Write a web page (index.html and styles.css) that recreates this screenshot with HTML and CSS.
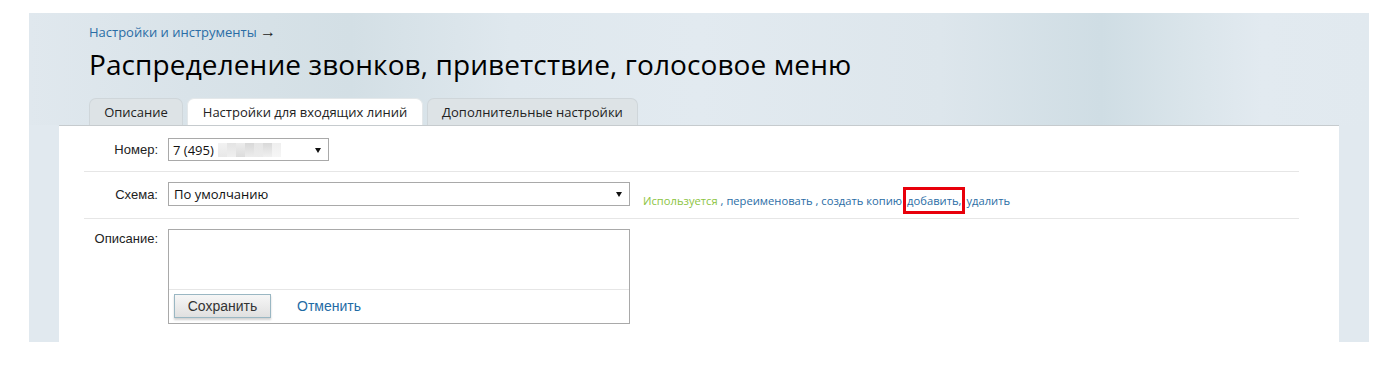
FILE: index.html
```html
<!DOCTYPE html>
<html lang="ru">
<head>
<meta charset="utf-8">
<link rel="stylesheet" href="styles.css">
</head>
<body>
<div class="page">
  <div class="header">
    <div class="crumbs"><a class="crumb" href="#">Настройки и инструменты</a> <span class="arrow">→</span></div>
    <h1 class="title">Распределение звонков, приветствие, голосовое меню</h1>
    <div class="tabs">
      <div class="tab tab-1">Описание</div>
      <div class="tab tab-active">Настройки для входящих линий</div>
      <div class="tab tab-3">Дополнительные настройки</div>
    </div>
  </div>
  <div class="content">
    <div class="row row-number">
      <div class="label">Номер:</div>
      <div class="select select-number">
        <span class="val">7 (495)</span>
        <span class="blur"><i class="b1"></i><i class="b2"></i><i class="b3"></i><i class="b4"></i><i class="b5"></i><i class="b6"></i><i class="b7"></i></span>
        <span class="caret"></span>
      </div>
    </div>
    <div class="row row-scheme">
      <div class="label">Схема:</div>
      <div class="select select-scheme">
        <span class="val">По умолчанию</span>
        <span class="caret"></span>
      </div>
      <div class="links"><span class="used">Используется</span> , <a href="#">переименовать</a> , <a href="#">создать копию</a><span class="hl"><a href="#">добавить</a>,</span><a href="#">удалить</a></div>
    </div>
    <div class="row row-desc">
      <div class="label">Описание:</div>
      <div class="desc-box">
        <div class="desc-area"></div>
        <div class="desc-actions">
          <button class="btn">Сохранить</button>
          <a class="cancel" href="#">Отменить</a>
        </div>
      </div>
    </div>
  </div>
</div>
</body>
</html>
```

FILE: styles.css
```css
* { box-sizing: border-box; }
html, body { margin: 0; padding: 0; background: #fff; }
body { font-family: "Open Sans", "Noto Sans", sans-serif; color: #000; }
a { text-decoration: none; }

.page {
  margin: 13px 29px 0;
  width: 1340px;
  height: 329px;
  background: #e1e9ef;
  display: flex;
  flex-direction: column;
}

.header {
  padding: 10px 60px 0;
  height: 112px;
  background:
    linear-gradient(90deg,
      #e0e8ee 0%, #d9e3e9 12%, #d3dfe5 24%, #dfe8ee 36%, #e2eaf0 50%,
      #dde6ec 68%, #cfdde4 80%, #d9e4ea 86%, #e2eaf0 92%, #e1e9ef 100%);
  display: flex;
  flex-direction: column;
}

.crumbs {
  font-size: 13px;
  line-height: 18px;
  color: #333;
  height: 18px;
}
.crumb { color: #2a6da5; }
.arrow { color: #222; font-size: 16px; line-height: 16px; }

.title {
  margin: 3px 0 0;
  font-weight: normal;
  font-size: 28px;
  line-height: 40px;
  color: #000;
  letter-spacing: 0.1px;
}

.tabs {
  margin-top: auto;
  display: flex;
  gap: 4px;
  height: 27px;
}
.tab {
  height: 27px;
  padding: 0;
  font-size: 13px;
  line-height: 27px;
  color: #222;
  background: #dde3e6;
  border: 1px solid #cfd6da;
  border-bottom: none;
  border-radius: 7px 7px 0 0;
  text-align: center;
}
.tab-1 { width: 94px; }
.tab-active { width: 236px; background: #fff; border-color: #e4e8ea; }
.tab-3 { width: 211px; }

.content {
  margin: 0 30px;
  flex: 1;
  background: #fff;
  border-top: 1px solid #c6cbce;
  padding: 0 40px 0 25px;
}

.row {
  display: flex;
  align-items: center;
  border-bottom: 1px solid #e6e6e6;
}
.row-number { height: 46px; padding-top: 2px; }
.row-scheme { height: 47px; padding-bottom: 2px; }
.row-desc { border-bottom: none; align-items: flex-start; padding-top: 10px; }

.label {
  width: 74px;
  margin-right: 10px;
  text-align: right;
  font-family: "Liberation Sans", Arial, sans-serif;
  font-size: 13px;
  color: #222;
}
.row-desc .label { padding-top: 2px; }

.select {
  position: relative;
  display: flex;
  align-items: center;
  border: 1px solid #a9a9a9;
  background: #fff;
  font-size: 13px;
  color: #111;
  padding-left: 4px;
}
.select-number { width: 161px; height: 23px; }
.select-scheme { width: 462px; height: 24px; padding-left: 5px; }
.caret {
  position: absolute;
  right: 7px;
  top: 9px;
  width: 0; height: 0;
  border-left: 3.5px solid transparent;
  border-right: 3.5px solid transparent;
  border-top: 5px solid #111;
}
.blur {
  display: flex;
  margin-left: 4px;
  height: 14px;
}
.blur i { display: block; width: 9px; height: 14px; }
.b1 { background: linear-gradient(#f2f2f2, #e8e8e8); }
.b2 { background: linear-gradient(#e4e4e4, #efefef); }
.b3 { background: linear-gradient(#ececec, #dcdcdc); }
.b4 { background: linear-gradient(#d8d8d8, #ececec); }
.b5 { background: linear-gradient(#e6e6e6, #ebebeb); }
.b6 { background: linear-gradient(#d9d9d9, #f0f0f0); }
.b7 { background: linear-gradient(#efefef, #f6f6f6); }

.links {
  margin-left: 13px;
  margin-top: 12px;
  font-size: 11.2px;
  color: #2a6da5;
  white-space: nowrap;
}
.links a { color: #2a6da5; }
.used { color: #8cc43f; }
.hl {
  display: inline-block;
  border: 3px solid #e8000b;
  padding: 3px 1px 3px 1px;
  margin: 0 1px 0 1px;
  line-height: 15px;
}

.desc-box {
  width: 462px;
  height: 95px;
  border: 1px solid #a9a9a9;
  display: flex;
  flex-direction: column;
}
.desc-area { height: 60px; border-bottom: 1px solid #e6e6e6; }
.desc-actions {
  display: flex;
  align-items: center;
  padding: 4px 0 0 5px;
  gap: 26px;
}
.btn {
  width: 97px;
  height: 24px;
  font-family: "Liberation Sans", Arial, sans-serif;
  font-size: 14px;
  color: #333;
  border: 1px solid #9ab7c3;
  background: linear-gradient(#f6f6f6, #e0e0e0);
  box-shadow: 0 2px 2px rgba(0,0,0,0.18);
  padding: 0;
}
.cancel {
  font-family: "Liberation Sans", Arial, sans-serif;
  font-size: 14px;
  color: #1f6ba5;
}
```
